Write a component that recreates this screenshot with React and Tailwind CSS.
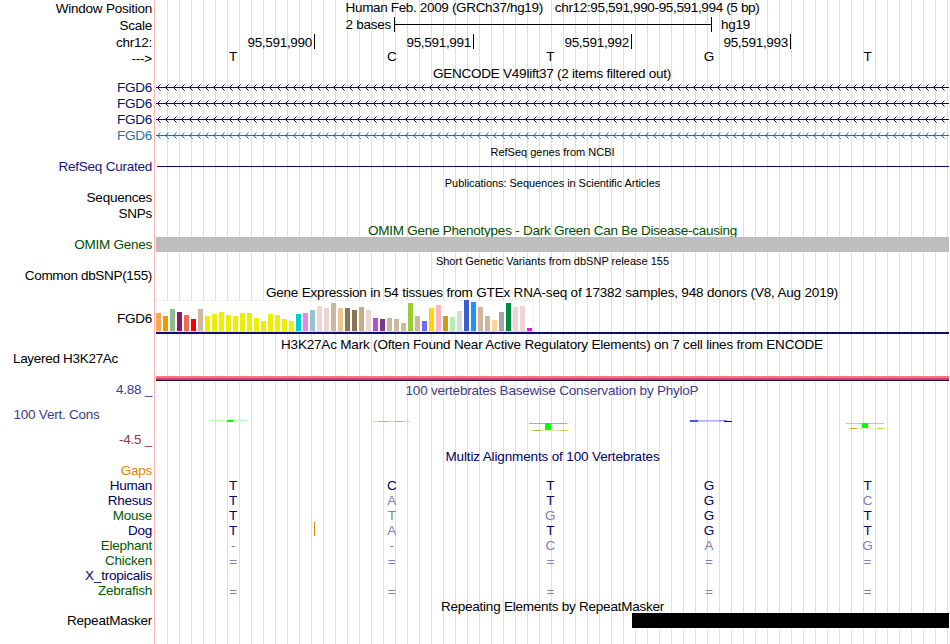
import React from "react";

const labels = [
  ["Window Position", "h-[17px]"],
  ["Scale", "h-[17px]"],
  ["chr12:", "h-[17px]"],
  ["--->", "h-[16px]"],
  ["FGD6", "h-[29px] text-[#0c0c78]"],
  ["FGD6", "h-[16px] text-[#0c0c78]"],
  ["FGD6", "h-[16px] text-[#0c0c78]"],
  ["FGD6", "h-[16px] text-[#1a78b4]"],
  ["RefSeq Curated", "h-[31px] text-[#14147d]"],
  ["Sequences", "h-[31px]"],
  ["SNPs", "h-[16px]"],
  ["OMIM Genes", "h-[31px] text-[#005000]"],
  ["Common dbSNP(155)", "h-[31px] tracking-[-0.33px]"],
  ["FGD6", "h-[43px]"],
  ["Layered H3K27Ac", "h-[40px] pr-[36px] tracking-[-0.3px]"],
  ["4.88 _", "h-[31px] text-[#3c3c8c]"],
  ["100 Vert. Cons", "h-[25px] pr-[54.5px] text-[#3c3c8c]"],
  ["-4.5 _", "h-[25px] text-[#8c3c3c]"],
  ["Gaps", "h-[31px] text-[#e18700]"],
  ["Human", "h-[15px] text-[#000064]"],
  ["Rhesus", "h-[15px] text-[#000064]"],
  ["Mouse", "h-[15px] text-[#005a00]"],
  ["Dog", "h-[15px] text-[#000064]"],
  ["Elephant", "h-[15px] text-[#005a00]"],
  ["Chicken", "h-[15px] text-[#005a00]"],
  ["X_tropicalis", "h-[15px] text-[#000064]"],
  ["Zebrafish", "h-[15px] text-[#005a00]"],
  ["RepeatMasker", "h-[30px]"],
];

const positions = ["95,591,990", "95,591,991", "95,591,992", "95,591,993"];

const alignments = ["TCTGT", "TATGC", "TTGGT", "TATGT", "--CAG", "=====", "     ", "====="];

const tissues = [
  [18, "#ffa54f"], [15, "#ee9a00"], [22, "#8fbc8f"], [19, "#8b1c62"], [16, "#ee6a50"], [12, "#ff0000"],
  [22, "#cdb79e"], [15, "#eeee00"], [17, "#eeee00"], [19, "#eeee00"], [16, "#eeee00"], [15, "#eeee00"],
  [18, "#eeee00"], [18, "#eeee00"], [13, "#eeee00"], [10, "#eeee00"], [17, "#eeee00"], [16, "#eeee00"],
  [12, "#eeee00"], [10, "#eeee00"], [17, "#00cdcd"], [18, "#ee82ee"], [21, "#9ac0cd"], [25, "#eed5d2"],
  [23, "#eed5d2"], [28, "#cdb79e"], [23, "#eec591"], [23, "#8b7355"], [21, "#8b7355"], [24, "#cdaa7d"],
  [21, "#eed5d2"], [13, "#b452cd"], [12, "#7a378b"], [13, "#cdb79e"], [12, "#cdb79e"], [8, "#cdb79e"],
  [28, "#9acd32"], [15, "#cdb79e"], [10, "#7a67ee"], [23, "#ffd700"], [26, "#ffb6c1"], [15, "#cd9b1d"],
  [14, "#b4eeb4"], [20, "#d9d9d9"], [31, "#3a5fcd"], [29, "#1e90ff"], [24, "#cdb79e"], [15, "#cdb79e"],
  [11, "#ffd39b"], [19, "#a6a6a6"], [28, "#008b45"], [24, "#eed5d2"], [25, "#eed5d2"], [3, "#ff00ff"],
];

function Label({ text, className }) {
  return (
    <div className={`flex items-end justify-end ${className.includes("pr-") ? "" : "pr-[2px]"} ${className}`}>
      <span className="leading-4">{text}</span>
    </div>
  );
}

function Title({ className, children }) {
  return (
    <div className={`flex justify-center ${className}`}>
      <span className="leading-4">{children}</span>
    </div>
  );
}

function Bases({ bases, className, tone }) {
  return (
    <div className={`flex items-end ${className}`}>
      {bases.split("").map((base, i) => (
        <span
          key={i}
          className={`w-[158.7px] pr-[4.5px] text-center ${base === "=" ? "leading-[14px]" : "leading-4"} ${
            tone ? tone(base, i) : ""
          }`}
        >
          {base}
        </span>
      ))}
    </div>
  );
}

const matchTone = (base, i) => (base === alignments[0][i] ? "text-[#000064]" : "text-[#8080b4]");

function GeneRow({ className }) {
  return (
    <svg width="793" height="16" className={`block ${className}`} stroke="currentColor" fill="none">
      <path d="M0 7.5H793" />
      {Array.from({ length: 99 }, (_, i) => (
        <path key={i} d={`M${i * 8 + 4.5} 4.5l-3 3l3 3`} />
      ))}
    </svg>
  );
}

function Conservation() {
  return (
    <svg width="793" height="46" className="block" shapeRendering="crispEdges">
      <rect x="55" y="21" width="37" height="1" fill="#b4ffb4" />
      <rect x="71" y="21" width="6" height="2" fill="#00ff00" />
      <rect x="216" y="22" width="38" height="1" fill="#ffc8c8" />
      <rect x="222" y="22" width="12" height="1" fill="#f09696" />
      <rect x="239" y="22" width="8" height="1" fill="#f09696" />
      <rect x="373" y="24" width="38" height="1" fill="#3cff3c" />
      <rect x="389" y="24" width="6" height="7" fill="#00ff00" />
      <rect x="375" y="31" width="38" height="1" fill="#e6e6aa" />
      <rect x="377" y="31" width="8" height="1" fill="#b4b432" />
      <rect x="403" y="31" width="8" height="1" fill="#c8c864" />
      <rect x="533" y="21" width="38" height="1" fill="#b4b4ff" />
      <rect x="534" y="21" width="8" height="2" fill="#5050ff" />
      <rect x="542" y="22" width="24" height="1" fill="#c8c8ff" />
      <rect x="563" y="21" width="8" height="1" fill="#8c8cff" />
      <rect x="568" y="22" width="8" height="1" fill="#0000a0" />
      <rect x="690" y="24" width="38" height="1" fill="#78ff78" />
      <rect x="706" y="24" width="6" height="5" fill="#00ff00" />
      <rect x="692" y="29" width="39" height="1" fill="#ebebbe" />
      <rect x="694" y="29" width="7" height="1" fill="#b4b432" />
      <rect x="722" y="29" width="5" height="1" fill="#c8c864" />
    </svg>
  );
}

export default function App() {
  return (
    <div className="flex h-[644px] w-[950px] overflow-hidden bg-white font-['Liberation_Sans',Arial,sans-serif] text-[13.5px] tracking-[-0.24px] text-black">
      <div className="w-[154px] shrink-0 whitespace-nowrap">
        {labels.map(([text, className], i) => (
          <Label key={i} text={text} className={className} />
        ))}
      </div>
      <div className="w-[795px] shrink-0 whitespace-nowrap border-l border-[#ffb4b4] pl-px">
        <div className="h-[644px] w-[793px] bg-[linear-gradient(90deg,#dcdcf5_1px,transparent_1px)] bg-[length:12px_100%] bg-[position:11px_0]">
          <Title className="h-[16px] tracking-[-0.34px]">
            Human Feb. 2009 (GRCh37/hg19)
            <span className="inline-block w-3" />
            chr12:95,591,990-95,591,994 (5 bp)
          </Title>
          <div className="flex h-[17px] items-end">
            <span className="w-[235px] text-right leading-4">2 bases</span>
            <div className="mb-px ml-[3px] flex h-[15px] w-[318px] items-center border-x border-black">
              <div className="h-px w-full bg-black" />
            </div>
            <span className="ml-[9px] leading-4">hg19</span>
          </div>
          <div className="grid h-[18px] grid-cols-[159px_159px_158px_159px] pt-px">
            {positions.map((p) => (
              <div
                key={p}
                className="h-[15px] border-r border-black pr-[2px] text-right leading-[18px] tracking-[-0.3px]"
              >
                {p}
              </div>
            ))}
          </div>
          <Bases bases="TCTGT" className="h-[14px]" />
          <Title className="h-[15px] items-start pr-[1px] pt-px">GENCODE V49lift37 (2 items filtered out)</Title>
          <GeneRow className="text-[#0c0c78]" />
          <GeneRow className="text-[#0c0c78]" />
          <GeneRow className="text-[#0c0c78]" />
          <GeneRow className="text-[#1a6eaa]" />
          <Title className="h-[16px] items-end text-[11px] tracking-normal">RefSeq genes from NCBI</Title>
          <div className="h-[14px] pl-px pt-[6px]">
            <div className="h-px bg-[#0c0c78]" />
          </div>
          <Title className="h-[17px] items-end text-[11px] tracking-[-0.05px]">
            Publications: Sequences in Scientific Articles
          </Title>
          <Title className="mt-[32px] h-[14px] items-start text-[#005000]">
            OMIM Gene Phenotypes - Dark Green Can Be Disease-causing
          </Title>
          <div className="relative h-[15px] bg-[#bebebe]" />
          <Title className="h-[17px] items-end text-[11px] tracking-normal">
            Short Genetic Variants from dbSNP release 155
          </Title>
          <Title className="mt-[16px] h-[15px] items-start pr-[1px] tracking-[-0.185px]">
            Gene Expression in 54 tissues from GTEx RNA-seq of 17382 samples, 948 donors (V8, Aug 2019)
          </Title>
          <div className="h-[34px] border-b-2 border-[#0c0c78]">
            <div className="flex h-[32px] w-[378px] items-end gap-[2px] border-b border-b-[#dcdcdc] bg-white shadow-[inset_0_1px_#f0f0f0,inset_-1px_0_#f0f0f0]">
              {tissues.map(([height, color], i) => (
                <div key={i} className="w-[5px] shrink-0" style={{ height, backgroundColor: color }} />
              ))}
            </div>
          </div>
          <Title className="h-[19px] items-end pr-[1px] tracking-[-0.19px]">
            H3K27Ac Mark (Often Found Near Active Regulatory Elements) on 7 cell lines from ENCODE
          </Title>
          <div className="mt-[23px] h-[2px] bg-[#ff7878]" />
          <div className="h-[2px] bg-[#d23c78]" />
          <div className="h-px bg-[#1e0032]" />
          <Title className="h-[18px] items-end pr-[1px] tracking-[-0.22px] text-[#3c3c8c]">
            100 vertebrates Basewise Conservation by PhyloP
          </Title>
          <Conservation />
          <Title className="h-[20px] items-end tracking-[-0.14px] text-[#000064]">
            Multiz Alignments of 100 Vertebrates
          </Title>
          <div className="relative mt-[14px]">
            {alignments.map((bases, i) => (
              <Bases key={i} bases={bases} className="h-[15px]" tone={matchTone} />
            ))}
            <div className="absolute left-[158px] top-[43px] h-[14px] w-px bg-[#e18700]" />
          </div>
          <Title className="h-[14px] items-start">Repeating Elements by RepeatMasker</Title>
          <div className="ml-[476px] h-[15px] bg-black" />
        </div>
      </div>
    </div>
  );
}
